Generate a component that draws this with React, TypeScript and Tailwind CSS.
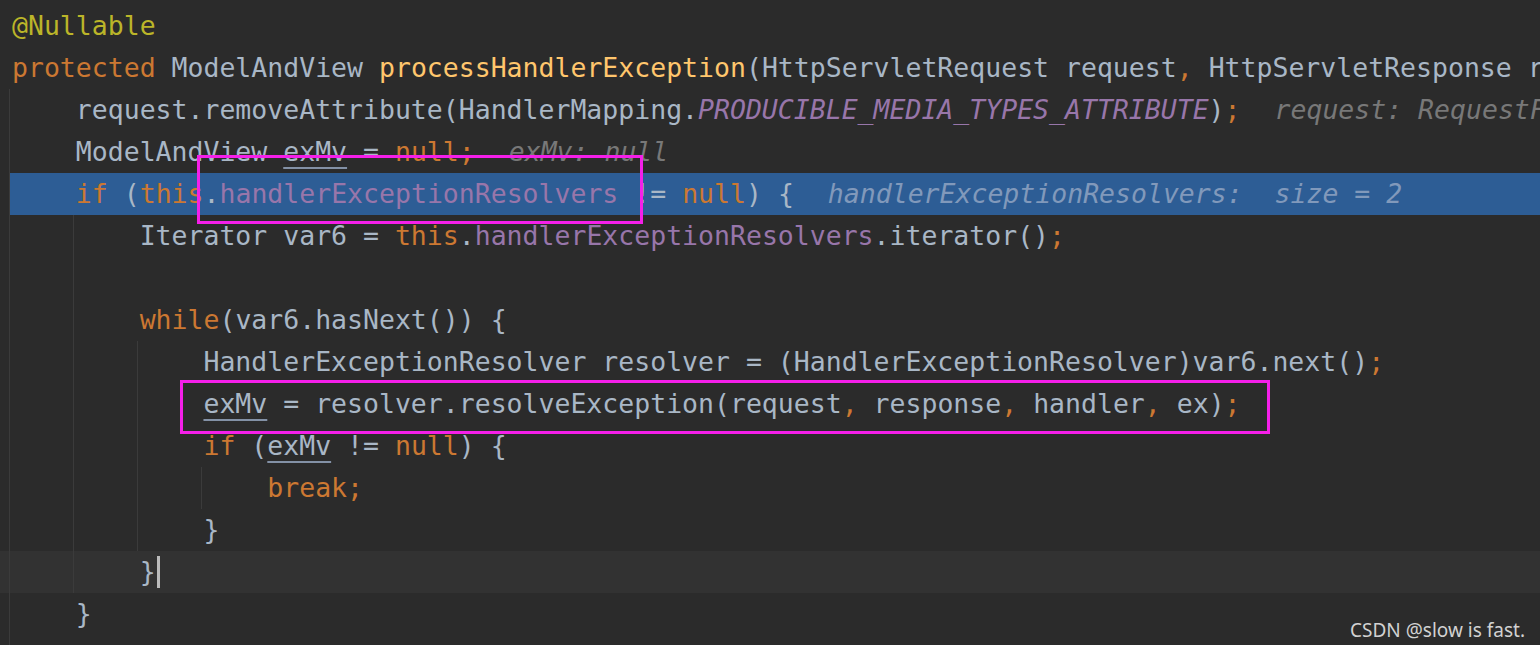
import React from 'react';

type Tok = [string, string?];

const D = 'text-[#a9b7c6]';
const K = 'text-[#cc7832]';
const F = 'text-[#9876aa]';
const FI = 'italic text-[#9876aa]';
const M = 'text-[#ffc66d]';
const A = 'text-[#bbb529]';
const U = 'text-[#a9b7c6] underline decoration-[#8391a6] decoration-2 underline-offset-[6px]';

type Line = {
  tokens: Tok[];
  hint?: string;
  guides: number[];
  kind?: 'exec' | 'caret';
};

const lines: Line[] = [
  { tokens: [['@Nullable', A]], guides: [] },
  {
    tokens: [
      ['protected ', K],
      ['ModelAndView ', D],
      ['processHandlerException', M],
      ['(HttpServletRequest request', D],
      [', ', K],
      ['HttpServletResponse response', D],
      [', ', K],
      ['Object handler', D],
    ],
    guides: [],
  },
  {
    tokens: [
      ['    request.removeAttribute(HandlerMapping.', D],
      ['PRODUCIBLE_MEDIA_TYPES_ATTRIBUTE', FI],
      [')', D],
      [';', K],
    ],
    hint: 'request: RequestFacade@1234',
    guides: [0],
  },
  {
    tokens: [
      ['    ModelAndView ', D],
      ['exMv', U],
      [' = ', D],
      ['null;', K],
    ],
    hint: 'exMv: null',
    guides: [0],
  },
  {
    tokens: [
      ['    ', D],
      ['if ', K],
      ['(', D],
      ['this', K],
      ['.', D],
      ['handlerExceptionResolvers', F],
      [' != ', D],
      ['null', K],
      [') {', D],
    ],
    hint: 'handlerExceptionResolvers:  size = 2',
    guides: [0],
    kind: 'exec',
  },
  {
    tokens: [
      ['        Iterator var6 = ', D],
      ['this', K],
      ['.', D],
      ['handlerExceptionResolvers', F],
      ['.iterator()', D],
      [';', K],
    ],
    guides: [0, 4],
  },
  { tokens: [], guides: [0, 4] },
  {
    tokens: [
      ['        ', D],
      ['while', K],
      ['(var6.hasNext()) {', D],
    ],
    guides: [0, 4],
  },
  {
    tokens: [
      ['            HandlerExceptionResolver resolver = (HandlerExceptionResolver)var6.next()', D],
      [';', K],
    ],
    guides: [0, 4, 8],
  },
  {
    tokens: [
      ['            ', D],
      ['exMv', U],
      [' = resolver.resolveException(request', D],
      [', ', K],
      ['response', D],
      [', ', K],
      ['handler', D],
      [', ', K],
      ['ex)', D],
      [';', K],
    ],
    guides: [0, 4, 8],
  },
  {
    tokens: [
      ['            ', D],
      ['if ', K],
      ['(', D],
      ['exMv', U],
      [' != ', D],
      ['null', K],
      [') {', D],
    ],
    guides: [0, 4, 8],
  },
  { tokens: [['                ', D], ['break;', K]], guides: [0, 4, 8, 12] },
  { tokens: [['            }', D]], guides: [0, 4, 8] },
  { tokens: [['        }', D]], guides: [0, 4], kind: 'caret' },
  { tokens: [['    }', D]], guides: [0] },
];

const guideX: Record<number, string> = {
  0: 'left-[9px]',
  4: 'left-[73px]',
  8: 'left-[137px]',
  12: 'left-[201px]',
};

const CodeLine = ({ line }: { line: Line }) => {
  const exec = line.kind === 'exec';
  const caret = line.kind === 'caret';
  return (
    <div className={`relative h-[42px] flex items-center ${caret ? 'bg-[#323232]' : ''}`}>
      {exec && <div className="absolute inset-y-0 left-[10px] right-0 bg-[#2d5d95]" />}
      {line.guides.map((g) => (
        <span key={g} className={`absolute top-0 bottom-0 w-px bg-[#3b3b3b] ${guideX[g]}`} />
      ))}
      <div className="relative pl-[12px] whitespace-pre flex items-center">
        {line.tokens.map(([text, cls], i) => (
          <span key={i} className={cls}>
            {text}
          </span>
        ))}
        {caret && <span className="inline-block w-[3px] h-[32px] bg-[#bbbbbb] ml-[1px]" />}
        {line.hint && (
          <span className={`ml-[34px] italic ${exec ? 'text-[#8199bb]' : 'text-[#787878]'}`}>
            {line.hint}
          </span>
        )}
      </div>
    </div>
  );
};

export default function App() {
  return (
    <div className="relative w-[1540px] h-[645px] overflow-hidden bg-[#2b2b2b] font-['DejaVu_Sans_Mono',monospace] text-[26.5px] leading-none">
      <div className="pt-[5px] flex flex-col">
        {lines.map((l, i) => (
          <CodeLine key={i} line={l} />
        ))}
        <div className="relative h-[10px]">
          <span className="absolute top-0 bottom-0 left-[9px] w-px bg-[#3b3b3b]" />
        </div>
      </div>

      {/* highlight boxes */}
      <div className="absolute left-[197px] top-[155px] w-[446px] h-[69px] border-[3px] border-[#f51fe9]" />
      <div className="absolute left-[180px] top-[380px] w-[1090px] h-[54px] border-[3px] border-[#f51fe9]" />

      <div className="absolute right-[15px] bottom-[5px] font-['Noto_Sans',sans-serif] text-[19px] text-[#d2d2d2] leading-none">
        CSDN @slow is fast.
      </div>
    </div>
  );
}
